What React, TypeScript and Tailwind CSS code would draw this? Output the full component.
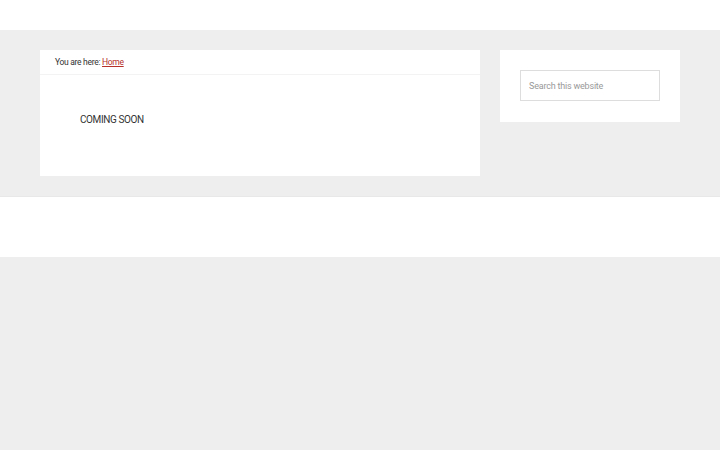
export default function App() {
  const font = { fontFamily: 'Roboto, "Noto Sans", sans-serif' };
  return (
    <div className="min-h-[450px] bg-[#eeeeee] text-[#333]" style={font}>
      <header className="h-[30px] bg-white" />
      <div className="flex gap-5 px-10 pt-5 pb-5 border-b border-[#e8e8e8]">
        <main className="w-[440px] h-[126px] bg-white flex flex-col">
          <div className="h-[25px] border-b border-[#f3f3f3] px-[15px] pt-px flex items-center text-[8.5px] text-[#333] tracking-[-0.3px]">
            You are here:&nbsp;<a href="#" className="text-[#b5312a] underline">Home</a>
          </div>
          <div className="px-10 pt-[37px] text-[10px] text-[#333] tracking-[-0.4px]">COMING SOON</div>
        </main>
        <aside className="w-[180px] h-[72px] bg-white p-5">
          <div className="h-[31px] w-[140px] border border-[#dddddd] flex items-center px-2 pt-[3px] text-[9px] text-[#999] tracking-[-0.2px]">
            Search this website
          </div>
        </aside>
      </div>
      <footer className="h-[60px] bg-white" />
    </div>
  );
}
